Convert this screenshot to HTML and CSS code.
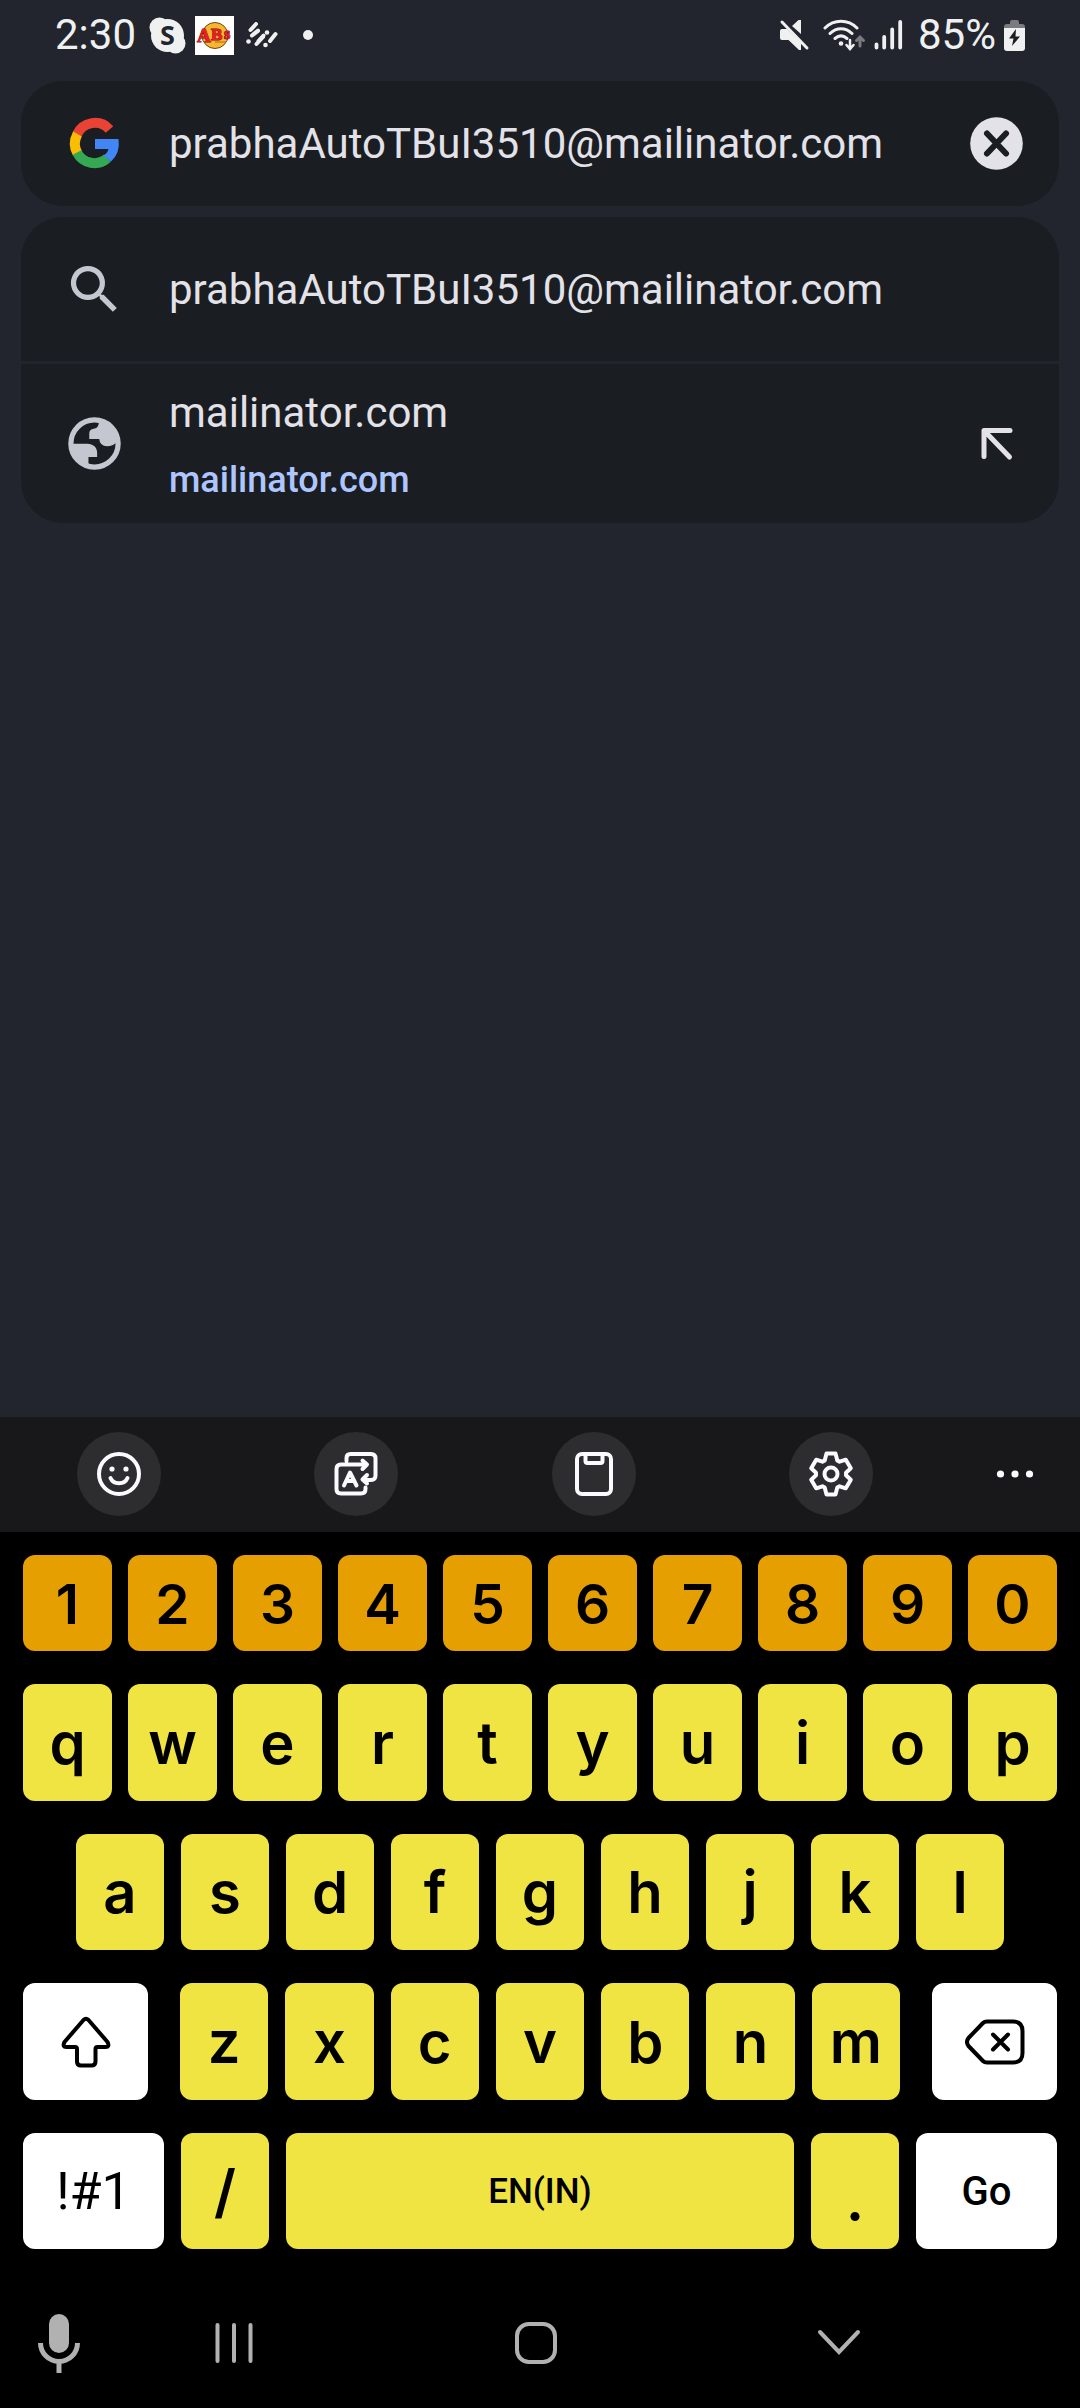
FILE: index.html
```html
<!DOCTYPE html>
<html lang="en">
<head>
<meta charset="utf-8">
<meta name="viewport" content="width=device-width, initial-scale=1">
<title>Search</title>
<link rel="stylesheet" href="styles.css">
</head>
<body>
<div class="screen">
  <header class="status">
    <div class="status-left">
      <time class="status-text">2:30</time>
      <svg class="skype" width="37" height="37" viewBox="0 0 37 37" aria-hidden="true">
        <circle cx="18.500" cy="18.500" r="16.500" fill="#eff1f1"/><circle cx="10.500" cy="10.500" r="10" fill="#eff1f1"/><circle cx="26.500" cy="26.500" r="10" fill="#eff1f1"/>
        <text x="18.500" y="28" text-anchor="middle" class="skype-s">S</text>
      </svg>
      <svg class="abs" width="39" height="39" viewBox="0 0 39 39" aria-hidden="true">
        <rect width="39" height="39" fill="#fff"/>
        <circle cx="20" cy="19.500" r="13" fill="#f9b62f" stroke="#6b4a18" stroke-width="1"/>
        <g class="abs-text"><text x="2" y="26" font-size="19">A</text><text x="16" y="24" font-size="17">B</text><text x="29" y="23" font-size="16">s</text></g>
        <path d="M20 26H31" stroke="#c2631c" stroke-width="1"/>
      </svg>
      <svg class="dashes" width="32" height="26" viewBox="0 0 32 26" aria-hidden="true">
        <path d="M4.500 8L10 2M6 13.500L12 9M6.500 13L12 8.500M10.500 22L17 15M17.500 13.500L12.500 19M24 19L29.500 12" stroke="#eff1f1" stroke-width="4" stroke-linecap="round"/>
        <g fill="#eff1f1"><circle cx="2.500" cy="19.500" r="2.300"/><circle cx="21" cy="10.500" r="2.300"/><circle cx="19.500" cy="23" r="2.300"/></g>
      </svg>
      <span class="more-dot"></span>
    </div>
    <div class="status-right">
      <svg class="mute" width="31" height="32" viewBox="0 0 31 32" aria-label="Muted">
        <path d="M1 12Q1 10 3 10H8L22 24V31H20L9.500 21H3Q1 21 1 19ZM13 7L19.500 1H22V15Z" fill="#eff1f1"/>
        <path d="M3 3L28 29" stroke="#eff1f1" stroke-width="3" stroke-linecap="round"/>
      </svg>
      <svg class="wifi" width="43" height="32" viewBox="0 0 43 32" aria-label="Wi-Fi">
        <g fill="none" stroke="#eff1f1" stroke-width="3" stroke-linecap="round"><path d="M2 9C11 0 25 0 34 9M7 14.500C13.500 8 22.500 8 29 14.500M12 19.500C16 16 20 16 24 19.500"/><path d="M27 21V29M23.500 26L27 30L30.500 26" stroke-width="2.500"/><path d="M37 27V19M33.500 21.500L37 18L40.500 21.500" stroke="#797b81"/></g>
        <circle cx="18" cy="24.500" r="2.300" fill="#eff1f1"/>
      </svg>
      <svg class="signal" width="29" height="30" viewBox="0 0 29 30" aria-label="Signal">
        <path d="M2.500 24.500V27.500M10.200 17V27.500M18.200 9.500V27.500M26.200 2V27.500" stroke="#eff1f1" stroke-width="3.800" stroke-linecap="round"/>
      </svg>
      <span class="status-text">85%</span>
      <svg class="battery" width="21" height="31" viewBox="0 0 21 31" aria-label="Charging">
        <path d="M6 4V2Q6 0 8 0H13Q15 0 15 2V4H18Q21 4 21 7V8H0V7Q0 4 3 4Z" fill="#797b81"/><path d="M0 8H21V28Q21 31 18 31H3Q0 31 0 28Z" fill="#eff1f1"/><path d="M12 9L5 18.500H9.500L8 26L16 16.500H11.500Z" fill="#1a1d21"/>
      </svg>
    </div>
  </header>

  <main class="content">
    <form class="omnibox">
      <svg class="lead" viewBox="0 0 63 63" aria-hidden="true">
        <g fill="none" stroke-width="10">
          <path d="M46.500 17.500A19.500 19.500 0 0 0 14 22.500" stroke="#ea4335"/>
          <path d="M14.500 22A20 20 0 0 0 14.500 41.500" stroke="#fbbc04"/>
          <path d="M14 40.500A19.500 19.500 0 0 0 44.500 46" stroke="#34a853"/>
        </g>
        <path d="M32 27H55.500Q57.500 41 48 49.500L40.500 43.500Q44.500 41 45.500 37H32Z" fill="#4285f4"/>
      </svg>
      <input class="query" type="text" aria-label="Search or type URL" value="prabhaAutoTBuI3510@mailinator.com">
      <button class="icon-button" type="button" aria-label="Clear">
        <svg viewBox="0 0 63 63"><circle cx="31.500" cy="31.500" r="26.300" fill="#e3e2e9"/><path d="M22 21.500L41 41.500M41 21.500L22 41.500" stroke="#1a1d21" stroke-width="6" stroke-linecap="round"/></svg>
      </button>
    </form>

    <ul class="suggestions">
      <li class="suggestion">
        <svg class="lead" viewBox="0 0 24 24" aria-hidden="true"><path fill="#c4c6d0" d="M15.500 14h-.79l-.28-.27A6.470 6.470 0 0 0 16 9.500 6.500 6.500 0 1 0 9.500 16c1.610 0 3.090-.59 4.230-1.570l.27.28v.79l5 4.990L20.490 19l-4.990-5zm-6 0C7.010 14 5 11.990 5 9.500S7.010 5 9.500 5 14 7.010 14 9.500 11.990 14 9.500 14z"/></svg>
        <a class="suggestion-text" href="#search"><span class="title">prabhaAutoTBuI3510@mailinator.com</span></a>
      </li>
      <li class="suggestion suggestion-site">
        <svg class="lead" viewBox="-12 -12 24 24" aria-hidden="true">
          <circle r="9" fill="none" stroke="#c4c6d0" stroke-width="2"/>
          <path fill="#c4c6d0" d="M1.600 -8.500V-7.400Q1.200 -5.700 -.3 -5.600Q-2 -5.400 -2 -3.800V-1.700H1.800Q2 1 4.800 1Q7 1 8.400 -.4A8.400 8.400 0 0 0 1.600 -8.500ZM-8.500 .1H-2.900C.2 .2 1 2 1 3.500V5.100H-2.300V8.200A8.500 8.500 0 0 1 -8.500 .1Z"/>
        </svg>
        <a class="suggestion-text" href="#site"><span class="title">mailinator.com</span><span class="url">mailinator.com</span></a>
        <button class="icon-button" type="button" aria-label="Refine">
          <svg viewBox="0 0 63 63"><path d="M45 18.500H19V44.500M20 19.500L44.500 45" fill="none" stroke="#e3e2e9" stroke-width="5" stroke-linecap="round" stroke-linejoin="round"/></svg>
        </button>
      </li>
    </ul>
  </main>

  <section class="keyboard" aria-label="Keyboard">
    <div class="tools">
      <div class="tool-cell"><button class="tool" aria-label="Emoji"><svg viewBox="-24 -24 48 48"><circle r="20"/><path d="M-8.500 4C-5.500 11 5.500 11 8.500 4"/><g class="solid"><circle cx="-7" cy="-5" r="2.600"/><circle cx="7" cy="-5" r="2.600"/></g></svg></button></div>
      <div class="tool-cell"><button class="tool" aria-label="Translate"><svg viewBox="-24 -24 48 48"><path d="M-9.500 -13V-16Q-9.500 -20 -5.500 -20H15Q19.500 -20 19.500 -15.500V1.500Q19.500 6 15 6H7M11 1L6.500 5.500L11 9.500M10 -9.500H-15Q-19.500 -9.500 -19.500 -5V15Q-19.500 19.500 -15 19.500H5Q9.500 19.500 9.500 15V13.500M6.500 -13.500L11 -9.500L6.500 -5M-12 11.500L-6 -1.500L.5 11.500M-9.500 7H-2.500"/></svg></button></div>
      <div class="tool-cell"><button class="tool" aria-label="Clipboard"><svg viewBox="-24 -24 48 48"><rect x="-17" y="-20" width="34" height="40" rx="5"/><path d="M-8.500 -19V-13Q-8.500 -11 -6.500 -11H6.500Q8.500 -11 8.500 -13V-19"/></svg></button></div>
      <div class="tool-cell"><button class="tool" aria-label="Settings"><svg viewBox="-24 -24 48 48"><path d="M-4.500 -20.500H4.500L6.300 -13.600L8.600 -12.300L14.800 -14.300L19.800 -5.700L15 -1.300V1.300L19.800 5.700L14.800 14.300L8.600 12.300L6.300 13.600L4.500 20.500H-4.500L-6.300 13.600L-8.600 12.300L-14.800 14.300L-19.800 5.700L-15 1.300V-1.300L-19.800 -5.700L-14.800 -14.300L-8.600 -12.300L-6.300 -13.600Z"/><circle r="6.500"/></svg></button></div>
      <button class="overflow" aria-label="More"><svg width="48" height="48" viewBox="-24 -24 48 48" fill="#fafaff"><circle cx="-14.500" r="3.600"/><circle r="3.600"/><circle cx="14.500" r="3.600"/></svg></button>
    </div>

    <div class="keys">
      <div class="row row-digits">
        <button class="key">1</button><button class="key">2</button><button class="key">3</button><button class="key">4</button><button class="key">5</button><button class="key">6</button><button class="key">7</button><button class="key">8</button><button class="key">9</button><button class="key">0</button>
      </div>
      <div class="row row-top">
        <button class="key">q</button><button class="key">w</button><button class="key">e</button><button class="key">r</button><button class="key">t</button><button class="key">y</button><button class="key">u</button><button class="key">i</button><button class="key">o</button><button class="key">p</button>
      </div>
      <div class="row row-home">
        <button class="key">a</button><button class="key">s</button><button class="key">d</button><button class="key">f</button><button class="key">g</button><button class="key">h</button><button class="key">j</button><button class="key">k</button><button class="key">l</button>
      </div>
      <div class="row row-shift">
        <button class="key key-action" aria-label="Shift"><svg viewBox="-30 -30 60 60"><path d="M-2.500 -22Q0 -24.500 2.500 -22L21.500 0Q24 5 19.500 5H11.500Q9.500 5 9.500 7V19.500Q9.500 23.500 5.500 23.500H-5Q-9 23.500 -9 19.500V7Q-9 5 -11 5H-19.500Q-24 5 -21.500 0Z"/></svg></button>
        <div class="letters">
          <button class="key">z</button><button class="key">x</button><button class="key">c</button><button class="key">v</button><button class="key">b</button><button class="key">n</button><button class="key">m</button>
        </div>
        <button class="key key-action" aria-label="Backspace"><svg viewBox="-30 -30 60 60"><path d="M-8 -20.500H18Q27.500 -20.500 27.500 -11V11Q27.500 20.500 18 20.500H-8Q-10.500 20.500 -12 19L-26.500 4Q-29.500 0 -26.500 -4L-12 -19Q-10.500 -20.500 -8 -20.500ZM-2 -7.500L13 7.500M13 -7.500L-2 7.500"/></svg></button>
      </div>
      <div class="row row-space">
        <button class="key key-action key-symbols">!#1</button><button class="key">/</button><button class="key key-space">EN(IN)</button><button class="key key-period">.</button><button class="key key-action key-go">Go</button>
      </div>
    </div>

    <nav class="nav">
      <button class="nav-mic" aria-label="Voice input"><svg width="48" height="60" viewBox="0 0 48 60"><rect x="14" y="1" width="20" height="39" rx="10" fill="#b1b1b1"/><path d="M5.500 30A18.500 18.500 0 0 0 42.500 30M24 49V60" fill="none" stroke="#b1b1b1" stroke-width="5"/></svg></button>
      <button aria-label="Recents"><svg width="48" height="48" viewBox="-24 -24 48 48"><path d="M-16.500 -18V18M0 -18V18M16.500 -18V18"/></svg></button>
      <button aria-label="Home"><svg width="48" height="48" viewBox="-24 -24 48 48"><rect x="-19" y="-19" width="38" height="38" rx="12"/></svg></button>
      <button aria-label="Hide keyboard"><svg width="48" height="48" viewBox="-24 -24 48 48"><path d="M-19 -11L0 9L19 -11"/></svg></button>
    </nav>
  </section>
</div>
</body>
</html>
```
FILE: styles.css
```css
* { box-sizing: border-box; }

body {
  margin: 0;
  background: #22252e;
  font-family: Roboto, "Noto Sans", sans-serif;
}

button, input {
  margin: 0;
  padding: 0;
  border: 0;
  background: none;
  color: inherit;
  font: inherit;
}

svg { display: block; flex: none; }

.screen {
  display: flex;
  flex-direction: column;
  min-height: 100vh;
}

/* Status bar */
.status {
  display: flex;
  justify-content: space-between;
  height: 70px;
  padding: 0 55px;
  color: #eff1f1;
}

.status-left, .status-right {
  display: flex;
  align-items: center;
}

.status-text {
  font-size: 42px;
  line-height: 48px;
}

.skype { margin-left: 13px; }
.skype-s { font: 700 27px "Open Sans", sans-serif; fill: #22252e; }
.abs { margin-left: 9px; }
.abs-text { font-family: "Liberation Serif", serif; font-weight: 700; fill: #ee1c25; stroke: #7a1015; stroke-width: 1px; paint-order: stroke; }
.dashes { margin-left: 12px; }
.more-dot { width: 10px; height: 10px; margin-left: 25px; border-radius: 50%; background: #eff1f1; }
.wifi { margin-left: 13px; }
.signal { margin: 0 15px 0 8px; }
.battery { margin-left: 8px; }

/* Address bar and suggestions */
.content {
  flex: 1;
  padding: 11px 21px;
  color: #e3e2e9;
}

.omnibox, .suggestion {
  display: flex;
  align-items: center;
  padding: 0 31px 0 42px;
  background: #1a1d21;
}

.omnibox {
  height: 125px;
  border-radius: 42px;
}

.lead {
  width: 63px;
  height: 63px;
  margin-right: 43px;
}

.query {
  flex: 1;
  min-width: 0;
  font-size: 42px;
  line-height: 52px;
  outline: 0;
}

.icon-button, .icon-button svg { width: 63px; height: 63px; }

.suggestions {
  display: flex;
  flex-direction: column;
  gap: 3px;
  margin: 11px 0 0;
  padding: 0;
  overflow: hidden;
  border-radius: 42px;
  list-style: none;
}

.suggestion { height: 144px; }
.suggestion-site { height: 159px; }

.suggestion-text {
  display: flex;
  flex: 1;
  flex-direction: column;
  gap: 18px;
  padding-top: 2px;
  color: inherit;
  text-decoration: none;
}

.title { font-size: 42px; line-height: 52px; }
.url { color: #aec6ff; font-size: 36px; font-weight: 500; line-height: 46px; }

/* Keyboard */
.keyboard { background: #000; }

.tools {
  display: flex;
  align-items: center;
  height: 115px;
  padding-bottom: 2px;
  background: #18181a;
}

.tool-cell { display: flex; flex: 1; justify-content: center; }

.tool {
  display: grid;
  place-items: center;
  width: 84px;
  height: 84px;
  border-radius: 50%;
  background: #2d2d2f;
}

.tool svg {
  width: 48px;
  height: 48px;
  fill: none;
  stroke: #fafaff;
  stroke-width: 4;
  stroke-linecap: round;
  stroke-linejoin: round;
}

.tool .solid { fill: #fafaff; stroke: none; }

.overflow { display: grid; place-items: center; width: 130px; height: 84px; }

.keys {
  display: grid;
  grid-template-rows: 96px 117px 116px 117px 116px;
  gap: 33px;
  padding: 23px 23px 29px;
}

.row, .letters { display: flex; gap: 17px; }
.row-digits, .row-top { gap: 16px; }
.row-home { padding: 0 53px; }
.row-shift { gap: 32px; }
.letters { flex: 720; }

.key {
  display: flex;
  flex: 88 1 0;
  align-items: center;
  justify-content: center;
  min-width: 0;
  border-radius: 12px;
  background: #f0e442;
  color: #000;
  font-family: Inter, Roboto, sans-serif;
  font-size: 58px;
  font-weight: 600;
  line-height: 70px;
}

.row-digits .key { padding-top: 2px; background: #e69f00; font-size: 55px; }
.key-action { flex-grow: 125; }
.row-space .key-action { flex-grow: 141; }
.row-space .key-space { flex-grow: 508; }
.row .key-action { background: #fff; }

.key svg {
  width: 60px;
  height: 60px;
  fill: none;
  stroke: #000;
  stroke-width: 4;
  stroke-linecap: round;
  stroke-linejoin: round;
}

.key-symbols, .key-space, .key-go { padding-top: 2px; font-family: Roboto, sans-serif; }
.key-symbols { font-size: 52px; font-weight: 400; }
.key-space { font-size: 35px; font-weight: 500; }
.key-go { font-size: 40px; font-weight: 500; }
.key-period { padding-top: 16px; }

/* Navigation */
.nav {
  display: flex;
  height: 130px;
  padding-right: 90px;
}

.nav button { display: grid; flex: 1; place-items: center; }
.nav .nav-mic { flex: 0 0 83px; padding-left: 35px; }

.nav button:not(.nav-mic) svg {
  fill: none;
  stroke: #b1b1b1;
  stroke-width: 4;
  stroke-linecap: round;
}
```
